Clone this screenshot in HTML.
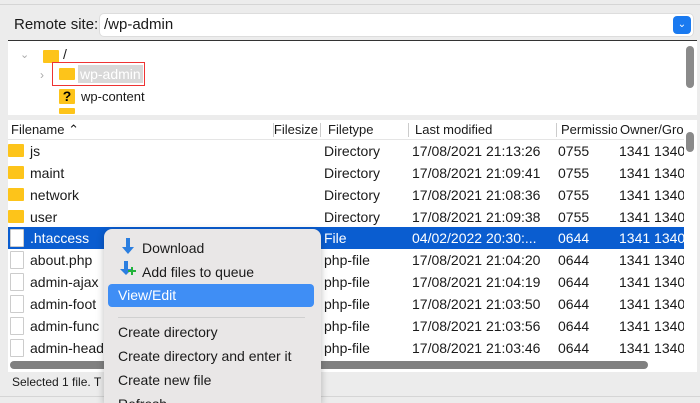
<!DOCTYPE html>
<html style="overflow:hidden;height:403px"><head><style>
body{margin:0;width:700px;height:403px;background:#ececec;font-family:"Liberation Sans",sans-serif;font-size:14px;color:#1a1a1a;position:relative;overflow:hidden}
.a{position:absolute;white-space:nowrap}
.row{position:absolute;left:8px;width:676px;height:22px;line-height:22px;overflow:hidden;white-space:nowrap}
.row span{position:absolute;white-space:nowrap}
.fold{position:absolute;width:16px;height:12px;background:#fdc41a;border-radius:1px}
.doc{position:absolute;width:12px;height:16px;background:#fff;border:1px solid #ccc;border-radius:1px}
.mi{position:absolute;left:118px;font-size:14px;white-space:nowrap}
</style></head><body>
<div class="a" style="left:0;top:4px;width:700px;height:1px;background:#d5d5d5"></div>
<div class="a" style="left:14px;top:16px;font-size:15px">Remote site:</div>
<div class="a" style="left:100px;top:14px;width:593px;height:22px;background:#fff;border-radius:4px;box-shadow:0 0 0 1px #ddd"></div>
<div class="a" style="left:104px;top:16px;font-size:15px">/wp-admin</div>
<div class="a" style="left:673px;top:16px;width:18px;height:18px;background:#1a7af0;border-radius:4px;color:#fff;font-size:10px;text-align:center;line-height:18px">&#8964;</div>
<div class="a" style="left:8px;top:40px;width:689px;height:74px;background:#fff;border-top:1px solid #333;overflow:hidden"></div>
<div class="a" style="left:686px;top:46px;width:8px;height:42px;background:#8a8a8a;border-radius:4px"></div>
<div class="a" style="left:20px;top:48px;color:#aaa;font-size:11px">&#8964;</div>
<div class="fold" style="left:43px;top:50px;height:13px"></div>
<div class="a" style="left:63px;top:46px">/</div>
<div class="a" style="left:40px;top:68px;color:#aaa;font-size:12px">&#8250;</div>
<div class="a" style="left:52px;top:62px;width:93px;height:24px;border:1px solid #e33;box-sizing:border-box"></div>
<div class="fold" style="left:59px;top:68px"></div>
<div class="a" style="left:78px;top:65px;background:#d8d8d8;color:#fff;padding:0 2px;line-height:18px">wp-admin</div>
<div class="fold" style="left:59px;top:89px;height:15px;text-align:center;font-size:14px;line-height:15px;font-weight:bold;color:#000">?</div>
<div class="a" style="left:81px;top:89px;font-size:13px">wp-content</div>
<div class="fold" style="left:59px;top:108px;height:6px"></div>
<div class="a" style="left:8px;top:120px;width:689px;height:252px;background:#fff"></div>
<div class="a" style="left:8px;top:120px;width:676px;height:19px;border-bottom:1px solid #e5e5e5;font-size:13px;line-height:19px;overflow:hidden">
<span class="a" style="left:3px">Filename &#8963;</span><span class="a" style="left:265px;width:1px;height:14px;top:3px;background:#ccc"></span><span class="a" style="left:262px;width:48px;text-align:right">Filesize</span><span class="a" style="left:312px;width:1px;height:14px;top:3px;background:#ccc"></span><span class="a" style="left:320px">Filetype</span><span class="a" style="left:400px;width:1px;height:14px;top:3px;background:#ccc"></span><span class="a" style="left:407px">Last modified</span><span class="a" style="left:548px;width:1px;height:14px;top:3px;background:#ccc"></span><span class="a" style="left:553px;width:56px;overflow:hidden">Permissions</span><span class="a" style="left:612px">Owner/Gro</span></div>
<div class="a" style="left:686px;top:132px;width:8px;height:20px;background:#8a8a8a;border-radius:4px"></div>
<div class="row" style="top:140px"><i class="fold" style="left:0;top:4px;height:13px"></i><span style="left:22px">js</span><span style="left:316px">Directory</span><span style="left:404px">17/08/2021 21:13:26</span><span style="left:550px">0755</span><span style="left:611px">1341 1340</span></div>
<div class="row" style="top:162px"><i class="fold" style="left:0;top:4px;height:13px"></i><span style="left:22px">maint</span><span style="left:316px">Directory</span><span style="left:404px">17/08/2021 21:09:41</span><span style="left:550px">0755</span><span style="left:611px">1341 1340</span></div>
<div class="row" style="top:184px"><i class="fold" style="left:0;top:4px;height:13px"></i><span style="left:22px">network</span><span style="left:316px">Directory</span><span style="left:404px">17/08/2021 21:08:36</span><span style="left:550px">0755</span><span style="left:611px">1341 1340</span></div>
<div class="row" style="top:206px"><i class="fold" style="left:0;top:4px;height:13px"></i><span style="left:22px">user</span><span style="left:316px">Directory</span><span style="left:404px">17/08/2021 21:09:38</span><span style="left:550px">0755</span><span style="left:611px">1341 1340</span></div>
<div class="row" style="top:227px;background:#0a5dd0;color:#fff"><i class="doc" style="left:2px;top:2px"></i><span style="left:22px">.htaccess</span><span style="left:316px">File</span><span style="left:404px">04/02/2022 20:30:...</span><span style="left:550px">0644</span><span style="left:611px">1341 1340</span></div>
<div class="row" style="top:249px"><i class="doc" style="left:2px;top:2px"></i><span style="left:22px">about.php</span><span style="left:316px">php-file</span><span style="left:404px">17/08/2021 21:04:20</span><span style="left:550px">0644</span><span style="left:611px">1341 1340</span></div>
<div class="row" style="top:271px"><i class="doc" style="left:2px;top:2px"></i><span style="left:22px">admin-ajax</span><span style="left:316px">php-file</span><span style="left:404px">17/08/2021 21:04:19</span><span style="left:550px">0644</span><span style="left:611px">1341 1340</span></div>
<div class="row" style="top:293px"><i class="doc" style="left:2px;top:2px"></i><span style="left:22px">admin-foot</span><span style="left:316px">php-file</span><span style="left:404px">17/08/2021 21:03:50</span><span style="left:550px">0644</span><span style="left:611px">1341 1340</span></div>
<div class="row" style="top:315px"><i class="doc" style="left:2px;top:2px"></i><span style="left:22px">admin-func</span><span style="left:316px">php-file</span><span style="left:404px">17/08/2021 21:03:56</span><span style="left:550px">0644</span><span style="left:611px">1341 1340</span></div>
<div class="row" style="top:337px"><i class="doc" style="left:2px;top:2px"></i><span style="left:22px">admin-head</span><span style="left:316px">php-file</span><span style="left:404px">17/08/2021 21:03:46</span><span style="left:550px">0644</span><span style="left:611px">1341 1340</span></div>
<div class="a" style="left:10px;top:361px;width:638px;height:8px;background:#808080;border-radius:4px"></div>
<div class="a" style="left:0;top:372px;width:700px;height:24px;background:#ececec;border-bottom:1px solid #d5d5d5"></div>
<div class="a" style="left:12px;top:375px;font-size:12px">Selected 1 file. T</div>
<div class="a" style="left:104px;top:229px;width:217px;height:174px;background:#e9e7e7;border-radius:8px 8px 0 0;box-shadow:0 2px 8px rgba(0,0,0,.25)"></div>
<svg class="a" style="left:119px;top:238px" width="18" height="38" viewBox="0 0 18 38"><path d="M7 0h4v9h4l-6 7-6-7h4z" fill="#2b7ee0"/><path d="M5 23h4v8h4l-6 6-6-6h4z" fill="#2b7ee0"/><path d="M12 29h2v3h3v2h-3v3h-2v-3h-3v-2h3z" fill="#23b33a"/></svg>
<div class="mi" style="left:142px;top:240px">Download</div>
<div class="mi" style="left:142px;top:264px">Add files to queue</div>
<div class="a" style="left:108px;top:284px;width:206px;height:23px;background:#3f8ef5;border-radius:4px"></div>
<div class="mi" style="top:287px;color:#fff">View/Edit</div>
<div class="a" style="left:118px;top:317px;width:187px;height:1px;background:#d0d0d0"></div>
<div class="mi" style="top:324px">Create directory</div>
<div class="mi" style="top:348px">Create directory and enter it</div>
<div class="mi" style="top:372px">Create new file</div>
<div class="mi" style="top:396px">Refresh</div>
</body></html>
